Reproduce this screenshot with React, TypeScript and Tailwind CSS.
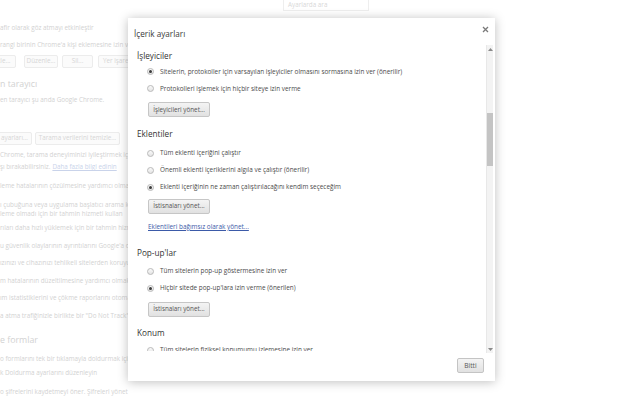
import React from "react";

function BgLine({ h, children, cls = "" }: { h: string; children: React.ReactNode; cls?: string }) {
  return <div className={`${h} flex items-center whitespace-nowrap ${cls}`}>{children}</div>;
}

function BgBtn({ children, w, cls = "" }: { children: React.ReactNode; w: string; cls?: string }) {
  return (
    <div className={`h-[13px] ${w} border border-[#ececec] rounded-[2px] bg-[#fbfbfb] flex items-center justify-center overflow-hidden whitespace-nowrap text-[#d6d6d6] text-[6.3px] shrink-0 ${cls}`}>
      {children}
    </div>
  );
}

function Radio({ checked }: { checked?: boolean }) {
  return (
    <div className="w-[7px] h-[7px] rounded-full border border-[#b9b9b9] bg-gradient-to-b from-[#fafafa] to-[#e4e4e4] flex items-center justify-center shrink-0">
      {checked && <div className="w-[3px] h-[3px] rounded-full bg-[#3a3a3a]" />}
    </div>
  );
}

function RadioRow({ checked, children }: { checked?: boolean; children: React.ReactNode }) {
  return (
    <div className="h-[17px] flex items-center pl-[10px] gap-[6px] whitespace-nowrap text-[#4a4a4a] text-[6.4px]">
      <Radio checked={checked} />
      <span>{children}</span>
    </div>
  );
}

function Btn({ children }: { children: React.ReactNode }) {
  return (
    <div className="ml-[11px] h-[15px] w-[62px] border border-[#c6c6c6] rounded-[2px] bg-gradient-to-b from-[#f4f4f4] to-[#e1e1e1] flex items-center justify-center text-[6.3px] text-[#555] whitespace-nowrap">
      {children}
    </div>
  );
}

function Heading({ children, mt }: { children: React.ReactNode; mt: string }) {
  return <div className={`${mt} h-[14px] flex items-center text-[8.2px] text-[#333]`}>{children}</div>;
}

export default function App() {
  return (
    <div className="relative w-[640px] h-[400px] overflow-hidden bg-white font-['Open_Sans',sans-serif]">
      {/* background settings page (faded) */}
      <div className="flex flex-col text-[#d2d2d2] text-[6.3px]">
        <div className="h-[12px] flex">
          <div className="ml-[283px] w-[86px] h-[11px] border-b border-x border-[#eeeeee] flex items-center pl-[4px] text-[6.3px] text-[#d8d8d8]">Ayarlarda ara</div>
        </div>
        <BgLine h="h-[12px]" cls="mt-[10px]">afir olarak göz atmayı etkinleştir</BgLine>
        <BgLine h="h-[12px]" cls="mt-[5px]">rangi birinin Chrome'a kişi eklemesine izin ver</BgLine>
        <div className="h-[14px] mt-[3px] flex items-center ml-[-12px]">
          <BgBtn w="w-[28px]">Ekle...</BgBtn>
          <BgBtn w="w-[34px]" cls="ml-[8px]">Düzenle...</BgBtn>
          <BgBtn w="w-[31px]" cls="ml-[4px]">Sil...</BgBtn>
          <BgBtn w="w-[48px]" cls="ml-[5px] justify-start pl-[4px]">Yer işaretleri...</BgBtn>
        </div>
        <BgLine h="h-[12px]" cls="mt-[11px] text-[8.8px]">n tarayıcı</BgLine>
        <BgLine h="h-[12px]" cls="mt-[3px]">en tarayıcı şu anda Google Chrome.</BgLine>
        <div className="h-[14px] mt-[25px] flex items-center ml-[-12px]">
          <BgBtn w="w-[44px]" cls="justify-end pr-[3px]">İçerik ayarları...</BgBtn>
          <BgBtn w="w-[85px]" cls="ml-[3px]">Tarama verilerini temizle...</BgBtn>
        </div>
        <BgLine h="h-[12px]" cls="mt-[4px]">Chrome, tarama deneyiminizi iyileştirmek için web hizmetlerini</BgLine>
        <BgLine h="h-[12px]">şı bırakabilirsiniz. <span className="ml-[2px] text-[#c9d3ea] underline">Daha fazla bilgi edinin</span></BgLine>
        <BgLine h="h-[12px]" cls="mt-[7px]">leme hatalarının çözülmesine yardımcı olması için bir web hizmeti kullan</BgLine>
        <BgLine h="h-[10px]" cls="mt-[8px]">ı çubuğuna veya uygulama başlatıcı arama kutusuna yazılan</BgLine>
        <BgLine h="h-[8px]">leme olmadı için bir tahmin hizmeti kullan</BgLine>
        <BgLine h="h-[12px]" cls="mt-[4px]">rıları daha hızlı yüklemek için bir tahmin hizmeti kullan</BgLine>
        <BgLine h="h-[12px]" cls="mt-[6px]">u güvenlik olaylarının ayrıntılarını Google'a otomatik olarak bildir</BgLine>
        <BgLine h="h-[12px]" cls="mt-[5px]">ızınızı ve cihazınızı tehlikeli sitelerden koruyun</BgLine>
        <BgLine h="h-[12px]" cls="mt-[6px]">m hatalarının düzeltilmesine yardımcı olmak için kullan</BgLine>
        <BgLine h="h-[12px]" cls="mt-[5px]">ım istatistiklerini ve çökme raporlarını otomatik olarak gönder</BgLine>
        <BgLine h="h-[12px]" cls="mt-[6px]">a atma trafiğinizle birlikte bir "Do Not Track" isteği gönder</BgLine>
        <BgLine h="h-[12px]" cls="mt-[13px] text-[8.8px]">e formlar</BgLine>
        <BgLine h="h-[12px]" cls="mt-[6px]">o formlarını tek bir tıklamayla doldurmak için Otomatik Doldurmayı</BgLine>
        <BgLine h="h-[12px]" cls="mt-[2px]">k Doldurma ayarlarını düzenleyin</BgLine>
        <BgLine h="h-[12px]" cls="mt-[7px]">o şifrelerini kaydetmeyi öner. Şifreleri yönet</BgLine>
      </div>

      {/* dialog */}
      <div className="absolute left-[128px] top-[18px] w-[367px] h-[363px] bg-white shadow-[0_1px_10px_rgba(0,0,0,0.26)] flex flex-col">
        <div className="h-[27px] flex items-start justify-between pl-[6px] pr-[6px] pt-[10px]">
          <div className="h-[12px] flex items-center text-[8.2px] text-[#3a3a3a]">İçerik ayarları</div>
          <div className="h-[8px] w-[8px] mt-[-3px] flex items-center justify-center">
            <svg width="7" height="7" viewBox="0 0 7 7">
              <path d="M1 1 L6 6 M6 1 L1 6" stroke="#7a7a7a" strokeWidth="1.3" />
            </svg>
          </div>
        </div>
        <div className="h-[308px] flex">
          <div className="flex-1 h-[306px] overflow-hidden pl-[9px] flex flex-col">
            <Heading mt="mt-[5px]">İşleyiciler</Heading>
            <div className="pt-[1px]">
              <RadioRow checked>Sitelerin, protokoller için varsayılan işleyiciler olmasını sormasına izin ver (önerilir)</RadioRow>
              <RadioRow>Protokolleri işlemek için hiçbir siteye izin verme</RadioRow>
            </div>
            <div className="mt-[5px]"><Btn>İşleyicileri yönet...</Btn></div>
            <Heading mt="mt-[11px]">Eklentiler</Heading>
            <div className="pt-[4px]">
              <RadioRow>Tüm eklenti içeriğini çalıştır</RadioRow>
              <RadioRow>Önemli eklenti içeriklerini algıla ve çalıştır (önerilir)</RadioRow>
              <RadioRow checked>Eklenti içeriğinin ne zaman çalıştırılacağını kendim seçeceğim</RadioRow>
            </div>
            <div className="mt-[3px]"><Btn>İstisnaları yönet...</Btn></div>
            <div className="mt-[8px] ml-[11px] h-[12px] flex items-center text-[6.4px] text-[#3b5aa8] underline whitespace-nowrap">Eklentileri bağımsız olarak yönet...</div>
            <Heading mt="mt-[16px]">Pop-up'lar</Heading>
            <div className="pt-[3px]">
              <RadioRow>Tüm sitelerin pop-up göstermesine izin ver</RadioRow>
              <RadioRow checked>Hiçbir sitede pop-up'lara izin verme (önerilen)</RadioRow>
            </div>
            <div className="mt-[5px]"><Btn>İstisnaları yönet...</Btn></div>
            <Heading mt="mt-[10px]">Konum</Heading>
            <div className="pt-[3px]">
              <RadioRow>Tüm sitelerin fiziksel konumumu izlemesine izin ver</RadioRow>
              <RadioRow checked>Bir site fiziksel konumumu izlemeye çalıştığında sor (önerilir)</RadioRow>
            </div>
          </div>
          <div className="w-[7px] mr-[2px] bg-[#f3f3f3] border-l border-[#e8e8e8] flex flex-col items-center">
            <div className="h-[8px] flex items-center justify-center">
              <svg width="5" height="3" viewBox="0 0 5 3"><path d="M0 3 L2.5 0 L5 3Z" fill="#8a8a8a" /></svg>
            </div>
            <div className="mt-[60px] w-[6px] h-[53px] bg-[#c4c4c4]" />
            <div className="flex-1" />
            <div className="h-[8px] flex items-center justify-center">
              <svg width="5" height="3" viewBox="0 0 5 3"><path d="M0 0 L2.5 3 L5 0Z" fill="#8a8a8a" /></svg>
            </div>
          </div>
        </div>
        <div className="flex-1 flex items-start justify-end pr-[11px] pt-[5px]">
          <div className="h-[15px] w-[27px] border border-[#c4c4c4] rounded-[2px] bg-gradient-to-b from-[#f4f4f4] to-[#e1e1e1] flex items-center justify-center text-[6.6px] text-[#555]">Bitti</div>
        </div>
      </div>
    </div>
  );
}
